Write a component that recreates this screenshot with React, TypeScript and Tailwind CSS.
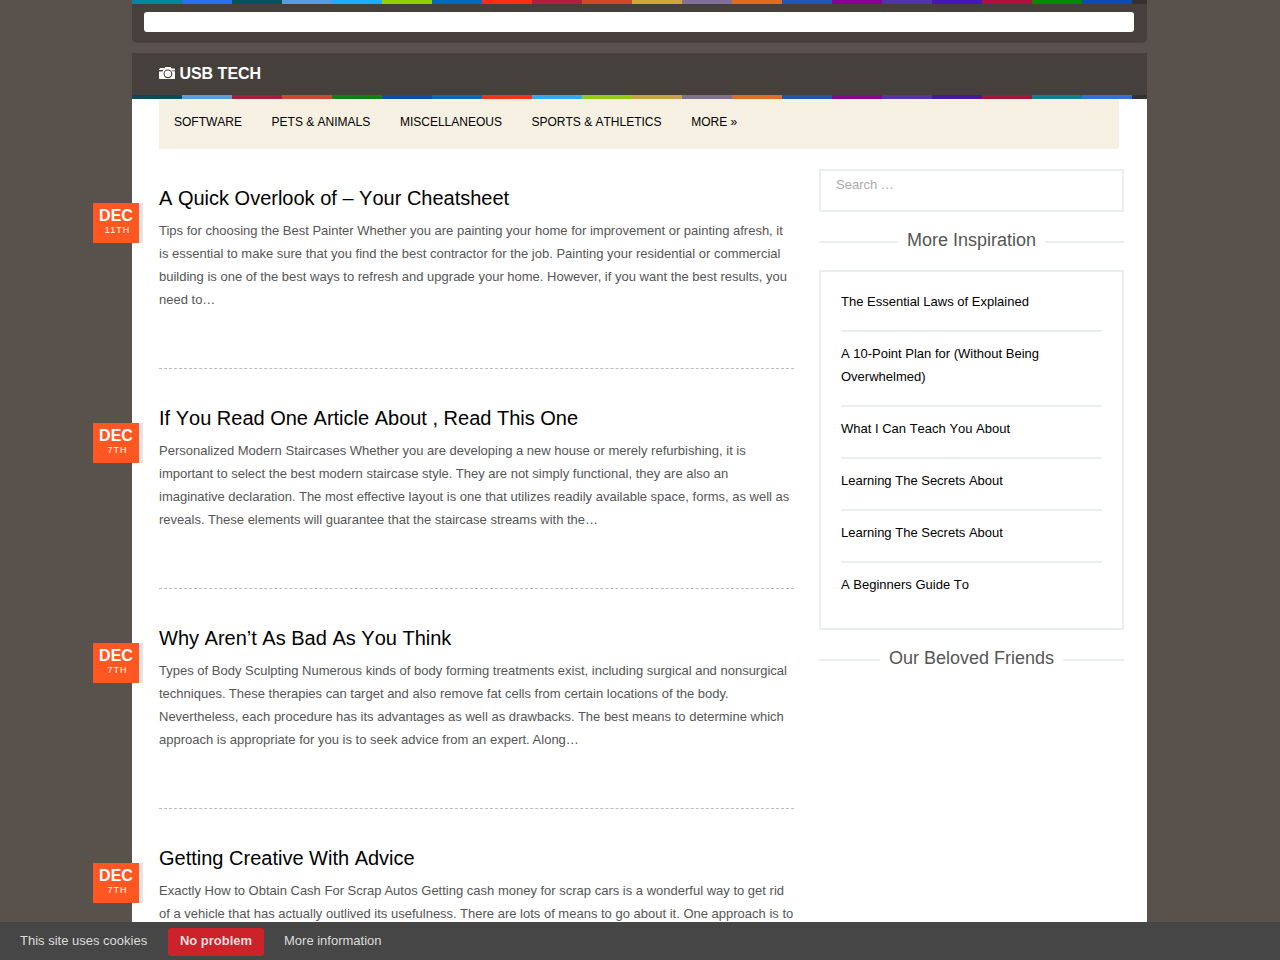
import { Fragment } from 'react'

interface PostProps {
    id: number;
    month: string;
    day: string;
    title: string;
    lines: string[];
}

const topColors = [
    '#00889c', '#2672ec', '#00535f', '#569ce3', '#1faeff', '#91d100', '#006ac1', '#ff2e12', '#b01e40', '#d24726',
    '#d2a637', '#80709a', '#e3691b', '#1d58b8', '#8c0095', '#5133ab', '#4617b4', '#ae113d', '#008a00', '#0a4bb5',
]

const headerColors = [
    '#0b4b57', '#629cd8', '#a3213f', '#c74c2d', '#12800f', '#144ba0', '#1069b0', '#ee3519', '#32a9ee', '#93cb14',
    '#c7a147', '#80708f', '#db7029', '#2356a5', '#7e0b86', '#53369f', '#45199f', '#9c193b', '#127e8c', '#346fd8',
]

const menu = ['SOFTWARE', 'PETS & ANIMALS', 'MISCELLANEOUS', 'SPORTS & ATHLETICS', 'MORE »']

const posts: PostProps[] = [
    {
        id: 1,
        month: 'DEC',
        day: '11TH',
        title: 'A Quick Overlook of – Your Cheatsheet',
        lines: [
            'Tips for choosing the Best Painter Whether you are painting your home for improvement or painting afresh, it',
            'is essential to make sure that you find the best contractor for the job. Painting your residential or commercial',
            'building is one of the best ways to refresh and upgrade your home. However, if you want the best results, you',
            'need to…',
        ],
    },
    {
        id: 2,
        month: 'DEC',
        day: '7TH',
        title: 'If You Read One Article About , Read This One',
        lines: [
            'Personalized Modern Staircases Whether you are developing a new house or merely refurbishing, it is',
            'important to select the best modern staircase style. They are not simply functional, they are also an',
            'imaginative declaration. The most effective layout is one that utilizes readily available space, forms, as well as',
            'reveals. These elements will guarantee that the staircase streams with the…',
        ],
    },
    {
        id: 3,
        month: 'DEC',
        day: '7TH',
        title: 'Why Aren’t As Bad As You Think',
        lines: [
            'Types of Body Sculpting Numerous kinds of body forming treatments exist, including surgical and nonsurgical',
            'techniques. These therapies can target and also remove fat cells from certain locations of the body.',
            'Nevertheless, each procedure has its advantages as well as drawbacks. The best means to determine which',
            'approach is appropriate for you is to seek advice from an expert. Along…',
        ],
    },
    {
        id: 4,
        month: 'DEC',
        day: '7TH',
        title: 'Getting Creative With Advice',
        lines: [
            'Exactly How to Obtain Cash For Scrap Autos Getting cash money for scrap cars is a wonderful way to get rid',
            'of a vehicle that has actually outlived its usefulness. There are lots of means to go about it. One approach is to',
        ],
    },
]

const inspiration = [
    'The Essential Laws of Explained',
    'A 10-Point Plan for (Without Being Overwhelmed)',
    'What I Can Teach You About',
    'Learning The Secrets About',
    'Learning The Secrets About',
    'A Beginners Guide To',
]

function Stripe({ colors }: { colors: string[] }) {
    return (
        <div className="flex h-1 w-full bg-[#333333]">
            {colors.map((color) => (
                <span key={color} className="h-1 w-[50px] shrink-0" style={{ backgroundColor: color }} />
            ))}
        </div>
    )
}

function CameraIcon() {
    return (
        <svg className="mb-0.5 h-3 w-4" viewBox="0 0 16 12" fill="none">
            <path fill="#fff" d="M1.3 1H4.4L5 1.7 6.2 0h5.4l1 1.4H15.6L16 2V11.4l-.6.6H.6L0 11.4V4.4h3.4L4.4 3H0V2.2z" />
            <path stroke="#45403c" strokeWidth=".8" d="M12.8 3.8H16" />
            <circle cx="8.9" cy="6.8" r="3.8" fill="#fff" stroke="#45403c" strokeWidth="1.1" />
        </svg>
    )
}

function WidgetTitle({ children }: { children: string }) {
    return (
        <div className="flex h-6 items-center">
            <span className="mt-1 h-0.5 flex-1 bg-[#ebeeee]" />
            <h3 className="px-[9px] text-[18px] leading-6 text-[#555555]">{children}</h3>
            <span className="mt-1 h-0.5 flex-1 bg-[#ebeeee]" />
        </div>
    )
}

function Post({ post }: { post: PostProps }) {
    return (
        <article className="relative h-[220px]">
            <div className="absolute -left-[66px] top-[34px] h-10 w-[50px] border-r-4 border-black/10">
                <div className="h-10 w-[46px] bg-[#ff5722] pt-[3px] text-center text-white">
                    <strong className="block text-[16px] leading-[19px]">{post.month}</strong>
                    <span className="block pl-[3px] text-[9px] leading-[10px] tracking-[1px]">{post.day}</span>
                </div>
            </div>
            <div className="h-[200px] border-b border-dashed border-[#bbbbbb] pt-[17px]">
                <h2 className="text-[20px] leading-6 text-black [font-kerning:none]">{post.title}</h2>
                <p className="mt-[9px] whitespace-nowrap text-[13px] leading-[23px] text-[#555555]">
                    {post.lines.map((line, i) => (
                        <Fragment key={i}>
                            {line}
                            <br />
                        </Fragment>
                    ))}
                </p>
            </div>
        </article>
    )
}

export default function App() {
    return (
        <div className="h-[960px] w-[1280px] overflow-hidden bg-[#59514b] font-['Liberation_Sans',Arial,sans-serif]">
            <div className="ml-[132px] flex h-[922px] w-[1015px] flex-col">
                <div className="h-[43px] shrink-0 overflow-hidden rounded-b-[5px] bg-[#45403c]">
                    <Stripe colors={topColors} />
                    <div className="ml-3 mt-2 h-5 w-[990px] rounded-[3px] bg-white" />
                </div>

                <header className="mt-2.5 shrink-0 bg-[#45403c]">
                    <div className="flex h-[42px] items-center gap-[4.4px] pl-[27px]">
                        <CameraIcon />
                        <h1 className="text-[16px] font-bold leading-6 text-white">USB TECH</h1>
                    </div>
                    <Stripe colors={headerColors} />
                </header>

                <div className="min-h-0 flex-1 bg-white pl-[27px]">
                    <nav className="flex h-[50px] w-[960px] gap-[29.6px] rounded-br-[2px] bg-[#f6f0e2] pl-[15px] pt-[13px] text-[12px] leading-5 text-black [font-kerning:none]">
                        {menu.map((item) => (
                            <a key={item}>{item}</a>
                        ))}
                    </nav>

                    <div className="flex gap-[25px] pt-5">
                        <main className="h-[753px] w-[635px]">
                            {posts.map((post) => (
                                <Post key={post.id} post={post} />
                            ))}
                        </main>

                        <aside className="w-[305px]">
                            <div className="h-[43px] border-2 border-[#ebeeee] px-[15px] pt-[3px] text-[13px] leading-[22px] text-[#aaaaaa]">
                                Search …
                            </div>
                            <div className="mt-4">
                                <WidgetTitle>More Inspiration</WidgetTitle>
                            </div>
                            <ul className="mt-[18px] h-[360px] border-2 border-[#ebeeee] px-5 pt-[18px] text-[13px] leading-[23px] text-black [font-kerning:none]">
                                {inspiration.map((item, i) => (
                                    <li key={i} className="mb-2.5 border-b-2 border-[#ebeeee] pb-[17px] last:border-0">
                                        {item}
                                    </li>
                                ))}
                            </ul>
                            <div className="mt-4">
                                <WidgetTitle>Our Beloved Friends</WidgetTitle>
                            </div>
                        </aside>
                    </div>
                </div>
            </div>

            <footer className="relative flex h-[38px] items-start bg-[#464646] pl-5 text-[13px] text-[#dddddd]">
                <span className="w-[148px] pt-2 leading-[22px]">This site uses cookies</span>
                <button className="mt-1.5 h-7 w-24 rounded-[3px] bg-[#cc2229] pb-0.5 font-bold leading-[22px]">No problem</button>
                <a className="ml-5 pt-2 leading-[22px]">More information</a>
            </footer>
        </div>
    )
}
